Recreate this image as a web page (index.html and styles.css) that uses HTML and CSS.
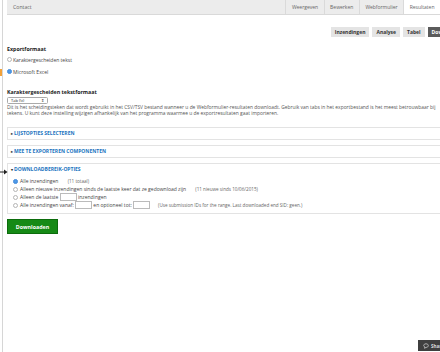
FILE: index.html
```html
<!DOCTYPE html>
<html lang="nl">
<head>
    <meta charset="UTF-8">
    <title>Resultaten - Contact</title>
    <link rel="stylesheet" href="styles.css">
</head>
<body>
    <span class="mark"></span>
    <svg class="pointer" width="8" height="6" viewBox="0 0 8 6"><path d="M0 3H5" stroke="#222" stroke-width="1"/><path d="M4 0.5L7.5 3L4 5.5Z" fill="#222"/></svg>

    <div class="page">
        <div class="tabbar">
            <a class="contact">Contact</a>
            <a>Weergeven</a>
            <a>Bewerken</a>
            <a>Webformulier</a>
            <a class="active">Resultaten</a>
            <a class="more"></a>
        </div>

        <div class="subtabs">
            <a>Inzendingen</a>
            <a>Analyse</a>
            <a>Tabel</a>
            <a class="active">Downloaden</a>
        </div>

        <div class="item">
            <div class="label">Exportformaat</div>
            <label class="radio first"><input type="radio" name="format">Karaktergescheiden tekst</label>
            <label class="radio"><input type="radio" name="format" checked>Microsoft Excel</label>
        </div>

        <div class="item delim">
            <div class="label">Karaktergescheiden tekstformaat</div>
            <span class="select">Tab (\t)</span>
            <div class="desc">Dit is het scheidingsteken dat wordt gebruikt in het CSV/TSV bestand wanneer u de Webformulier-resultaten downloadt. Gebruik van tabs in het exportbestand is het meest betrouwbaar bij tekens. U kunt deze instelling wijzigen afhankelijk van het programma waarmee u de exportresultaten gaat importeren.</div>
        </div>

        <div class="fieldset first">
            <div class="legend"><span class="arrow">&#9656;</span>Lijstopties selecteren</div>
        </div>
        <div class="fieldset">
            <div class="legend"><span class="arrow">&#9656;</span>Mee te exporteren componenten</div>
        </div>
        <div class="fieldset">
            <div class="legend"><span class="arrow">&#9662;</span>Downloadbereik-opties</div>
            <div class="ranges">
                <label class="row"><input type="radio" name="range" checked>Alle inzendingen <span class="note">(11 totaal)</span></label>
                <label class="row"><input type="radio" name="range">Alleen nieuwe inzendingen sinds de laatste keer dat ze gedownload zijn <span class="note">(11 nieuwe sinds 10/06/2015)</span></label>
                <label class="row"><input type="radio" name="range">Alleen de laatste <span class="box"></span> inzendingen</label>
                <label class="row"><input type="radio" name="range">Alle inzendingen vanaf: <span class="box"></span> en optioneel tot: <span class="box"></span> <span class="note">(Use submission IDs for the range. Last downloaded end SID: geen.)</span></label>
            </div>
        </div>

        <button class="btn">Downloaden</button>
    </div>

    <div class="share">
        <svg width="6" height="6" viewBox="0 0 6 6"><path d="M3 0.8C4.5 0.8 5.3 1.6 5.3 2.6C5.3 3.6 4.5 4.4 3 4.4L1.6 5.3L1.9 4.1C1.1 3.8 0.7 3.2 0.7 2.6C0.7 1.6 1.5 0.8 3 0.8Z" fill="none" stroke="#ddd" stroke-width="0.7"/></svg>
        <span>Share</span>
    </div>
</body>
</html>
```

FILE: styles.css
```css
html, body{
    margin: 0;
    overflow: hidden;
    background: #fff;
}
body{
    font-family: "Open Sans", "Liberation Sans", sans-serif;
    font-size: 5px;
    color: #333;
    height: 352px;
}

.page{
    margin-left: 2px;
    border-left: 1px solid #d6d6d6;
    padding-left: 4px;
    width: 465px;
    min-height: 352px;
}

/* top tabs */
.tabbar{
    display: flex;
    height: 14px;
    background: #ececec;
    border-bottom: 1px solid #d9d9d9;
}
.tabbar a{
    display: flex;
    align-items: center;
    padding: 0 5.5px;
    border-left: 1px solid #dadada;
    color: #666;
    font-size: 5px;
}
.tabbar .contact{
    flex: 1;
    border-left: 0;
    padding-left: 6px;
    font-size: 5.2px;
}
.tabbar .active{
    background: #fff;
}
.tabbar .more{
    width: 20px;
}

/* secondary tabs */
.subtabs{
    display: flex;
    justify-content: flex-end;
    gap: 3px;
    margin-top: 12px;
    padding-right: 5px;
}
.subtabs a{
    height: 10px;
    line-height: 10px;
    padding: 0 4px;
    background: #e4e4e4;
    font-weight: bold;
    color: #333;
}
.subtabs .active{
    background: #5b5b5b;
    color: #fff;
}

/* form items */
.item{
    margin-top: 9px;
}
.label{
    font-weight: bold;
    font-size: 5.3px;
    line-height: 7px;
    color: #222;
}
.radio{
    display: flex;
    align-items: center;
    height: 7px;
    margin-top: 5px;
    color: #444;
}
.radio.first{
    margin-top: 3px;
}
input[type=radio]{
    appearance: none;
    -webkit-appearance: none;
    box-sizing: border-box;
    width: 5px;
    height: 5px;
    margin: 0 1px 0 0;
    border: 0.6px solid #b5b5b5;
    border-radius: 50%;
    background: #fff;
}
input[type=radio]:checked{
    border-color: #2f7fd8;
    background: #3a8ee6;
    box-shadow: inset 0 0 0 1.3px #3a8ee6, inset 0 0 0 5px #fff;
    background: radial-gradient(circle, #fff 0 0.8px, #3a8ee6 1px);
}

.delim{
    margin-top: 14px;
}
.select{
    display: block;
    position: relative;
    width: 36px;
    height: 5px;
    line-height: 5px;
    margin-top: 1px;
    padding-left: 3px;
    border: 0.5px solid #aaa;
    border-radius: 1.5px;
    font-size: 4px;
    color: #222;
}
.select::after{
    content: "\21D5";
    position: absolute;
    right: 3px;
    top: 0;
    font-size: 4px;
}
.desc{
    width: 434px;
    margin-top: 1px;
    line-height: 5.5px;
    color: #555;
    font-size: 4.9px;
}

/* fieldsets */
.fieldset{
    border: 1px solid #e3e3e3;
    padding: 2px 3px;
    margin-top: 5px;
}
.fieldset.first{
    margin-top: 11px;
}
.legend{
    line-height: 7px;
    color: #1a74c0;
    font-weight: bold;
    text-transform: uppercase;
}
.arrow{
    color: #333;
    font-size: 4px;
    margin-right: 1px;
}
.ranges{
    margin-top: 4px;
    padding-bottom: 2px;
}
.row{
    display: flex;
    align-items: center;
    height: 8px;
    padding-left: 2px;
    color: #444;
    white-space: pre;
}
.row input{
    margin-right: 2px;
}
.note{
    margin-left: 8px;
    color: #666;
    font-size: 4.6px;
}
.box{
    display: inline-block;
    width: 15px;
    height: 6px;
    border: 0.5px solid #bbb;
    background: #fff;
}

.btn{
    display: block;
    width: 51px;
    height: 15px;
    margin-top: 5px;
    background: #168a16;
    border: 1px solid #0c6c0c;
    color: #fff;
    font-family: inherit;
    font-weight: bold;
    font-size: 5.3px;
    padding: 0;
}

/* overlays */
.mark{
    position: absolute;
    left: 0;
    top: 69px;
    width: 2px;
    height: 7px;
    background: #f2a23a;
}
.pointer{
    position: absolute;
    left: 0;
    top: 169px;
}
.share{
    position: fixed;
    left: 418px;
    bottom: 1px;
    width: 30px;
    height: 11px;
    display: flex;
    align-items: center;
    gap: 2px;
    padding-left: 5px;
    background: #3f3f3f;
    color: #ddd;
    font-size: 4.5px;
    font-weight: bold;
}
```
